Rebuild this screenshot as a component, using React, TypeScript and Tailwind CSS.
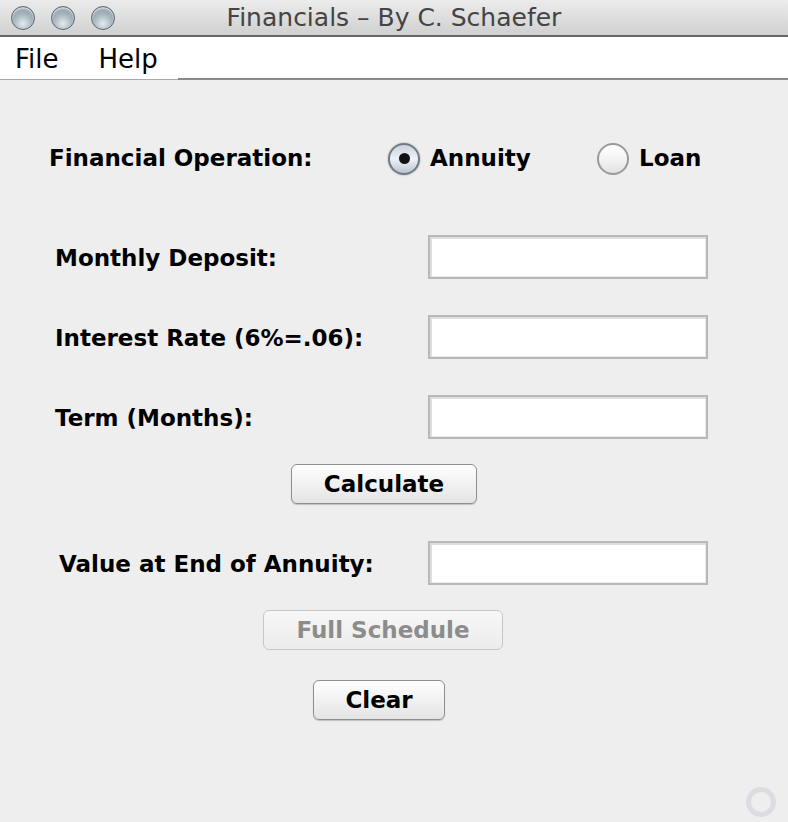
import React from 'react';

const font = { fontFamily: '"DejaVu Sans", Verdana, sans-serif' };

function Light() {
  return (
    <span className="block w-[24px] h-[24px] rounded-full border border-[#5d6a73] bg-[radial-gradient(circle_at_50%_75%,#e4ebef_0%,#a9b7c0_45%,#7d8d98_100%)] shadow-[inset_0_2px_2px_rgba(255,255,255,0.6)]" />
  );
}

function Radio({ checked }: { checked: boolean }) {
  return checked ? (
    <span className="flex items-center justify-center w-[32px] h-[32px] rounded-full border-2 border-[#6e7a86] bg-[linear-gradient(#c9d2dc,#eef2f6_50%,#b9c4cf)] shadow-[0_0_2px_rgba(0,0,0,0.35)]">
      <span className="block w-[11px] h-[11px] rounded-full bg-[#111]" />
    </span>
  ) : (
    <span className="block w-[32px] h-[32px] rounded-full border-2 border-[#9a9a9a] bg-[linear-gradient(#ffffff,#f4f4f4_50%,#e2e2e2)]" />
  );
}

function Field() {
  return (
    <div className="w-[280px] h-[44px] bg-white border-2 border-[#b8b8b8] shadow-[inset_2px_2px_0_#dedede,inset_-1px_-1px_0_#ececec]" />
  );
}

function Button({ label, width, disabled }: { label: string; width: number; disabled?: boolean }) {
  return (
    <button
      style={{ width }}
      className={`h-[40px] rounded-[6px] text-[23px] font-bold leading-none flex items-center justify-center pt-[1px] ${
        disabled
          ? 'border border-[#c6c6c6] bg-[linear-gradient(#f7f7f7,#ececec)] text-[#8c8c8c]'
          : 'border border-[#8f8f8f] bg-[linear-gradient(#ffffff,#f1f1f1_50%,#e4e4e4)] text-black shadow-[0_1px_1px_rgba(0,0,0,0.2)]'
      }`}
    >
      {label}
    </button>
  );
}

export default function App() {
  const rows = ['Monthly Deposit:', 'Interest Rate (6%=.06):', 'Term (Months):'];

  return (
    <div style={font} className="w-[788px] h-[822px] bg-[#eeeeee] flex flex-col overflow-hidden relative">
      {/* Title bar */}
      <div className="h-[37px] flex items-center relative bg-[linear-gradient(#ececec,#d0d0d0)] border-b-2 border-[#666]">
        <div className="flex gap-[16px] pl-[11px]">
          <Light />
          <Light />
          <Light />
        </div>
        <div className="absolute inset-0 flex items-center justify-center pt-[1px]">
          <span className="text-[25px] text-[#444]">Financials – By C. Schaefer</span>
        </div>
      </div>

      {/* Menu bar */}
      <div className="h-[43px] bg-white flex">
        <div className="w-[178px] flex items-center gap-[40px] pl-[15px] pt-[3px] border-b border-[#a8a8a8] text-[26px] text-black">
          <span>File</span>
          <span>Help</span>
        </div>
        <div className="flex-1 border-b-2 border-[#888]" />
      </div>

      {/* Content */}
      <div className="flex flex-col pt-[60px] text-[23px] font-bold text-black">
        <div className="h-[36px] flex items-center pt-[1px]">
          <span className="pl-[49px] w-[388px]">Financial Operation:</span>
          <Radio checked />
          <span className="ml-[10px] w-[167px]">Annuity</span>
          <Radio checked={false} />
          <span className="ml-[10px]">Loan</span>
        </div>

        <div className="flex flex-col gap-[36px] mt-[59px]">
          {rows.map((r) => (
            <div key={r} className="flex items-center">
              <span className="w-[428px] pl-[55px] pt-[2px]">{r}</span>
              <Field />
            </div>
          ))}
        </div>

        <div className="mt-[25px] ml-[291px]">
          <Button label="Calculate" width={186} />
        </div>

        <div className="flex items-center mt-[37px]">
          <span className="w-[428px] pl-[59px] pt-[2px]">Value at End of Annuity:</span>
          <Field />
        </div>

        <div className="mt-[25px] ml-[263px]">
          <Button label="Full Schedule" width={240} disabled />
        </div>

        <div className="mt-[30px] ml-[313px]">
          <Button label="Clear" width={132} />
        </div>
      </div>

      {/* Resize grip */}
      <span className="absolute left-[746px] top-[787px] w-[30px] h-[30px] rounded-full border-[5px] border-[#dcdde2]" />
    </div>
  );
}
